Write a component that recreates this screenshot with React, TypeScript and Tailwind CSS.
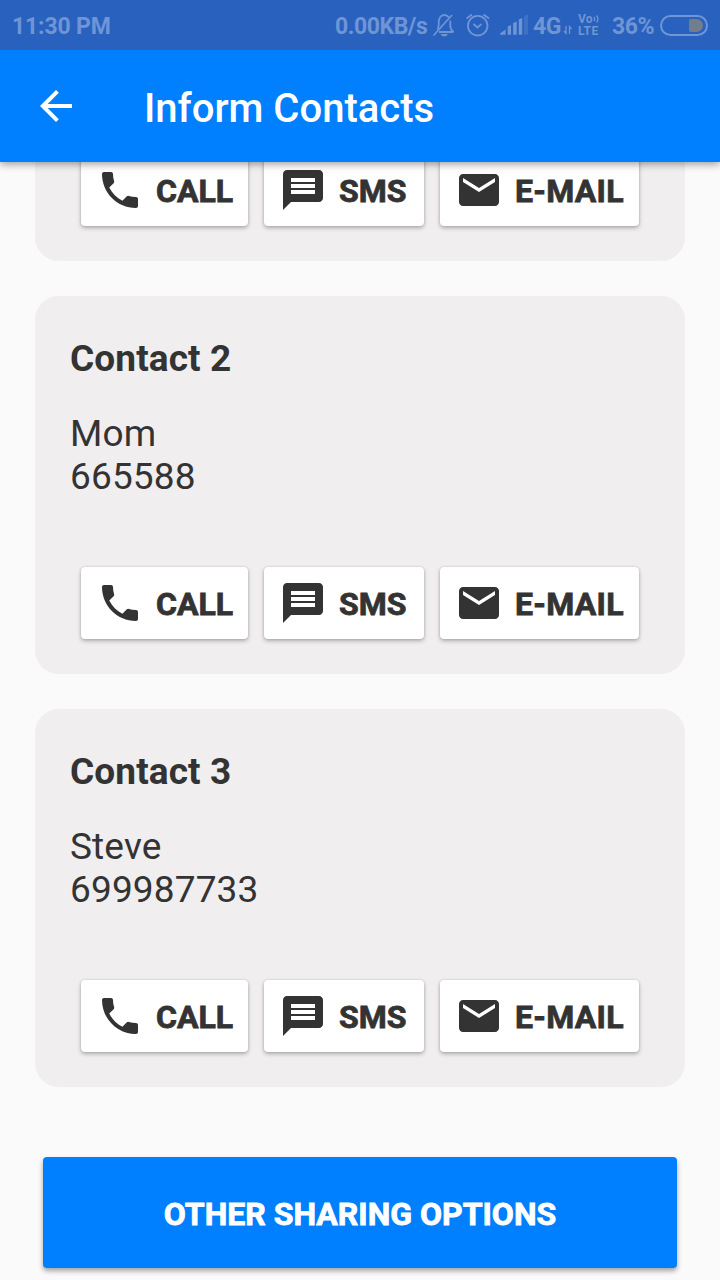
import React from "react";

function PhoneIcon() {
  return (
    <svg className="size-12 shrink-0" viewBox="0 0 24 24" fill="currentColor">
      <path d="M6.62 10.79c1.44 2.83 3.76 5.14 6.59 6.59l2.2-2.2c.27-.27.67-.36 1.02-.24 1.12.37 2.33.57 3.57.57.55 0 1 .45 1 1V20c0 .55-.45 1-1 1-9.39 0-17-7.61-17-17 0-.55.45-1 1-1h3.5c.55 0 1 .45 1 1 0 1.25.2 2.45.57 3.57.11.35.03.74-.25 1.02l-2.2 2.2z" />
    </svg>
  );
}

function MessageIcon() {
  return (
    <svg className="size-12 shrink-0" viewBox="0 0 24 24" fill="currentColor">
      <path d="M4 2h16c1.1 0 2 .9 2 2v12c0 1.1-.9 2-2 2H6l-4 4V4c0-1.100.9-2 2-2zm2 12h12v-2H6v2zm0-3h12V9H6v2zm0-3h12V6H6v2z" fillRule="evenodd" />
    </svg>
  );
}

function MailIcon() {
  return (
    <svg className="size-12 shrink-0" viewBox="0 0 24 24" fill="currentColor">
      <path d="M20 4H4c-1.1 0-1.99.9-1.990 2L2 18c0 1.100.9 2 2 2h16c1.100 0 2-.9 2-2V6c0-1.100-.9-2-2-2zm0 4l-8 5-8-5V6l8 5 8-5v2z" />
    </svg>
  );
}

const buttonClass =
  "flex h-[72px] items-center rounded-[4px] bg-white text-[32px] leading-none font-bold text-[#333] shadow-[0_2px_4px_rgba(0,0,0,0.28),0_0_2px_rgba(0,0,0,0.15)]";

const labelClass = "ml-3 pt-0.5 [-webkit-text-stroke:0.8px_currentColor]";

function Actions() {
  return (
    <div className="flex shrink-0 gap-4 pl-[46px]">
      <button className={`${buttonClass} w-[167px] pl-[15px]`}>
        <PhoneIcon />
        <span className={labelClass}>CALL</span>
      </button>
      <button className={`${buttonClass} w-[160px] pl-[15px]`}>
        <MessageIcon />
        <span className={labelClass}>SMS</span>
      </button>
      <button className={`${buttonClass} w-[199px] pl-[15px]`}>
        <MailIcon />
        <span className={`${labelClass} tracking-[0.3px]`}>E-MAIL</span>
      </button>
    </div>
  );
}

function ContactCard({ title, name, phone }: { title: string; name: string; phone: string }) {
  return (
    <section className="mt-[35px] h-[378px] rounded-[24px] bg-[#f0eeef] pt-[41px] text-[#333]">
      <h2 className="pl-[35px] text-[37px] leading-[43px] font-bold tracking-[0.1px]">{title}</h2>
      <div className="mt-8 h-[155px] pl-[35px] text-[37px] leading-[43px] tracking-[0.15px]">
        <p>{name}</p>
        <p>{phone}</p>
      </div>
      <Actions />
    </section>
  );
}

function StatusBar() {
  return (
    <div className="relative z-20 flex h-[50px] shrink-0 items-center bg-[#2961be] pl-3 text-[23px] leading-none font-bold text-[#6f95d5]">
      <span className="w-[323px] pt-0.5 tracking-[-0.15px] whitespace-nowrap">11:30 PM</span>
      <span className="w-[96px] pt-0.5 tracking-[-0.45px] whitespace-nowrap">0.00KB/s</span>
      <svg className="h-[50px] w-[102px] shrink-0" viewBox="431 0 102 50" fill="none" stroke="currentColor" strokeWidth="1.8">
        <path d="M439 32h14.500M437.500 29.500c1.500-2 1.200-4.500 1.200-6.500 0-4.500 2-8 5.500-8 2 0 3.500.8 4.500 2.200M450.300 20.500v6c0 2.500 1 3.500 3.200 5.500M433.500 35.500L452 15" />
        <path d="M440.500 34h7.500l-2 2.200h-3.500z" fill="currentColor" stroke="none" />
        <circle cx="477.700" cy="25.700" r="9.800" />
        <path d="M473.500 24l4 3.500 4-3.500M466.500 18.500l5.500-4M489 18.500l-5.500-4" />
        <g fill="currentColor" stroke="none">
          <path d="M500 34.800v-1.300l5.500-4v5.300zM507.700 26.500l3.300-1.500v9.800h-3.300zM513.200 23l3.500-1.500v13.300h-3.500zM518.800 19.500l3.400-1.500v16.800h-3.400z" />
          <path d="M524 16l4-1.500v20.300h-4z" opacity=".3" />
        </g>
      </svg>
      <span className="w-[29px] pt-0.5 tracking-[-0.4px] whitespace-nowrap">4G</span>
      <svg className="h-[50px] w-4 shrink-0" viewBox="562 0 16 50" fill="none" stroke="currentColor" strokeWidth="1.300">
        <path d="M566 26v7.500l-2-2.500M569.500 34v-7.500l2 2.500" />
      </svg>
      <div className="flex w-[34px] flex-col">
        <span className="flex h-[12px] items-center text-[12px] leading-[12px] font-bold tracking-[0.3px]">
          Vo
          <svg className="h-[10px] w-[7px]" viewBox="0 0 7 10" fill="none" stroke="currentColor" strokeWidth="1.300">
            <path d="M1 3q1.500 2 0 4M3.500 1.500q3 3.500 0 7" />
          </svg>
        </span>
        <span className="text-[12px] leading-[13px] tracking-[0.4px]">LTE</span>
      </div>
      <span className="w-[48px] pt-0.5 tracking-[-0.5px] whitespace-nowrap">36%</span>
      <div className="flex h-[21px] w-[48px] shrink-0 items-center justify-end rounded-full border-2 border-[#6f95d5] pr-[3px]">
        <div className="h-[13px] w-[14px] rounded-l-[2px] rounded-r-[7px] bg-[#737d8b]" />
      </div>
    </div>
  );
}

export default function App() {
  return (
    <main className="flex h-[1280px] w-[720px] flex-col overflow-hidden bg-[#fafafa] font-['Roboto',sans-serif]">
      <StatusBar />
      <header className="relative z-10 flex h-[112px] shrink-0 items-center bg-[#0080ff] pl-8 text-white shadow-[0_2px_8px_rgba(0,0,0,0.4)]">
        <svg className="size-12" viewBox="0 0 24 24" fill="currentColor">
          <path d="M20 11H7.830l5.590-5.590L12 4l-8 8 8 8 1.410-1.410L7.830 13H20v-2z" />
        </svg>
        <h1 className="ml-16 pt-1.5 text-[40px] leading-none font-medium">Inform Contacts</h1>
      </header>
      <div className="px-[35px]">
        <section className="flex h-[99px] flex-col justify-end rounded-b-[24px] bg-[#f0eeef] pb-[35px]">
          <Actions />
        </section>
        <ContactCard title="Contact 2" name="Mom" phone="665588" />
        <ContactCard title="Contact 3" name="Steve" phone="699987733" />
        <button className="mx-2 mt-[70px] flex h-[111px] w-[634px] items-center justify-center rounded-[4px] bg-[#0080ff] pt-0.5 text-[32px] leading-none font-bold text-white shadow-[0_3px_5px_rgba(0,0,0,0.35)] [-webkit-text-stroke:0.8px_currentColor]">
          OTHER SHARING OPTIONS
        </button>
      </div>
    </main>
  );
}
